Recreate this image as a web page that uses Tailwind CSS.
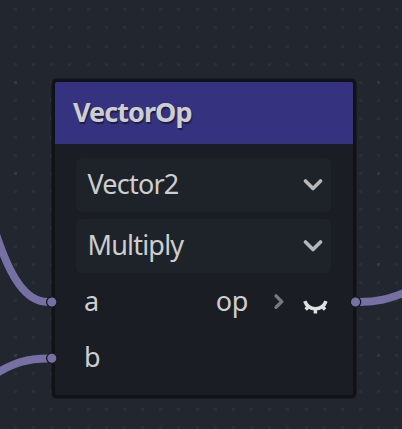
<!DOCTYPE html>
<html lang="en">
<head>
<meta charset="utf-8">
<title>VectorOp node</title>
<script src="https://cdn.jsdelivr.net/npm/@tailwindcss/browser@4"></script>
</head>
<body class="relative h-[429px] w-[402px] overflow-hidden bg-[#22262e] font-['Noto_Sans',sans-serif] text-[#cdcecf]">
  <svg id="grid" class="absolute inset-0" width="402" height="429" shape-rendering="crispEdges"></svg>

  <main class="absolute left-[52px] top-[79px] flex h-[319px] w-[304px] flex-col overflow-hidden rounded-[5px] border-3 border-[#111216] bg-[#1a1d24] shadow-[0_0_0_1px_rgba(17,18,22,0.45)]">
    <header class="flex h-[62px] shrink-0 items-center bg-[#35337f] pb-[3px] pl-[18px] text-[27px] leading-none font-bold tracking-[-0.95px]">
      <h1 class="[text-shadow:1px_2px_1px_rgba(0,0,0,0.45)]">VectorOp</h1>
    </header>
    <div class="flex flex-col gap-[7px] pr-[22px] pl-[21px] pt-[14px] text-[27px] leading-none tracking-[-0.8px]">
      <div class="flex h-[54px] items-center justify-between rounded-[6px] bg-[#1e2329] pr-2 pl-[11.5px]">
        <span class="pb-[3px]">Vector2</span>
        <svg width="20" height="14" viewBox="0 0 20 14" fill="none" stroke="#b5b7b9" stroke-width="3.6" stroke-linecap="round" stroke-linejoin="round"><path d="M2.5 3L10 10.5L17.5 3"/></svg>
      </div>
      <div class="flex h-[54px] items-center justify-between rounded-[6px] bg-[#1e2329] pr-2 pl-[11.5px]">
        <span class="pb-[3px]">Multiply</span>
        <svg width="20" height="14" viewBox="0 0 20 14" fill="none" stroke="#b5b7b9" stroke-width="3.6" stroke-linecap="round" stroke-linejoin="round"><path d="M2.5 3L10 10.5L17.5 3"/></svg>
      </div>
    </div>
    <div class="flex h-[56px] shrink-0 items-center pl-[29px] pr-[23px] text-[27px] leading-none tracking-[-0.4px]">
      <span class="flex-1 pb-[2px]">a</span>
      <span class="pb-[2px]">op</span>
      <svg class="ml-[25px]" width="12" height="18" viewBox="0 0 12 18" fill="none" stroke="#77797c" stroke-width="3.4" stroke-linecap="round" stroke-linejoin="round"><path d="M3 3.9L8.8 9.6L3 15.3"/></svg>
      <svg class="ml-[17px]" width="28" height="28" viewBox="0 0 28 28" fill="none" stroke="#e0e0e0" stroke-width="3.5" stroke-linecap="butt"><path d="M2.8 14.2C4.5 19 8.5 21.8 13.4 21.8S22.3 19 24 14.2"/><path d="M3.7 22.5L7.2 19M23.1 22.5L19.6 19M13.4 21V26.5"/></svg>
    </div>
    <div class="flex h-[56px] shrink-0 items-center pl-[29px] text-[27px] leading-none"><span class="pb-px">b</span></div>
  </main>

  <svg class="absolute inset-0" width="402" height="429" fill="none">
    <g stroke="#7670a5" stroke-width="7.8">
      <path d="M-4 234C10 276 25 302 48 302"/>
      <path d="M-4 373.5C14 363 27 358.5 48 358.5"/>
      <path d="M360 302C377 302 389 299 406 292"/>
    </g>
    <g fill="#7670a5" stroke="#16181e" stroke-width="1.3">
      <circle cx="51.8" cy="302" r="5.2"/>
      <circle cx="51.8" cy="358.3" r="5.2"/>
      <circle cx="355.5" cy="302" r="5.2"/>
    </g>
  </svg>

  <script>
    // Canvas grid: every fifth crossing is a major one.
    const grid = document.getElementById('grid');
    for (let i = 0; i < 22; i++) {
      for (let j = -4; j < 20; j++) {
        const dot = document.createElementNS('http://www.w3.org/2000/svg', 'rect');
        dot.setAttribute('x', Math.round(14 + i * 18.16));
        dot.setAttribute('y', Math.round(81 + j * 18.18));
        dot.setAttribute('width', 3);
        dot.setAttribute('height', 3);
        dot.setAttribute('fill', i % 5 === 0 && j % 5 === 0 ? '#34383f' : '#2a2e36');
        grid.appendChild(dot);
      }
    }
  </script>
</body>
</html>
